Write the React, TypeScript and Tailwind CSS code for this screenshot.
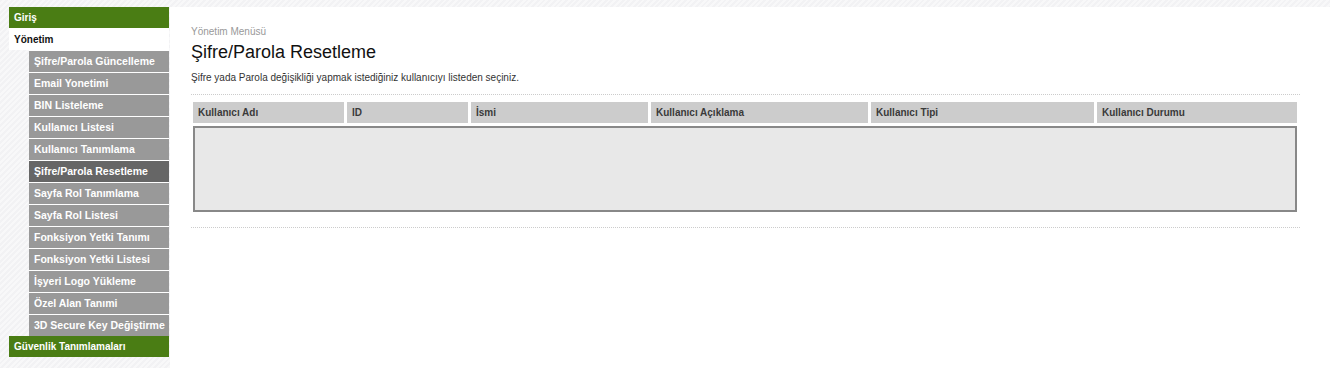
import React from 'react';

const subItems = [
  'Şifre/Parola Güncelleme',
  'Email Yonetimi',
  'BIN Listeleme',
  'Kullanıcı Listesi',
  'Kullanıcı Tanımlama',
  'Şifre/Parola Resetleme',
  'Sayfa Rol Tanımlama',
  'Sayfa Rol Listesi',
  'Fonksiyon Yetki Tanımı',
  'Fonksiyon Yetki Listesi',
  'İşyeri Logo Yükleme',
  'Özel Alan Tanımi',
  '3D Secure Key Değiştirme',
];

const columns = [
  'Kullanıcı Adı',
  'ID',
  'İsmi',
  'Kullanıcı Açıklama',
  'Kullanıcı Tipi',
  'Kullanıcı Durumu',
];

function App() {
  return (
    <div className="flex h-[368px] w-[1330px] overflow-hidden bg-[repeating-linear-gradient(135deg,#f2f2f4_0px,#f2f2f4_2px,#f8f8f9_2px,#f8f8f9_4px)] font-['Liberation_Sans',Arial,sans-serif]">
      {/* sol menü */}
      <aside className="w-[170px] shrink-0 pt-[7px] pl-[9px] pr-[1px]">
        <div className="flex h-[21px] items-center bg-[#4a7d14] px-[5px] text-[10px] font-bold text-white">
          Giriş
        </div>
        <div className="flex h-[22px] items-center bg-white px-[5px] pt-[1px] text-[10px] font-bold text-[#111]">
          Yönetim
        </div>
        <div className="pl-[20px]">
          {subItems.map((item) => (
            <div
              key={item}
              className={
                item === 'Şifre/Parola Resetleme'
                  ? 'flex h-[22px] items-center overflow-hidden whitespace-nowrap border-t border-white bg-[#666666] pl-[5px] text-[10.5px] font-bold text-white'
                  : 'flex h-[22px] items-center overflow-hidden whitespace-nowrap border-t border-white bg-[#999999] pl-[5px] text-[10.5px] font-bold text-white'
              }
            >
              {item}
            </div>
          ))}
        </div>
        <div className="flex h-[21px] items-center bg-[#4a7d14] px-[5px] text-[10px] font-bold text-white">
          Güvenlik Tanımlamaları
        </div>
      </aside>

      {/* içerik */}
      <main className="mt-[7px] flex-1 bg-white pl-[21px] pr-[30px] pt-[19px]">
        <div className="text-[10px] leading-[12px] text-[#999]">Yönetim Menüsü</div>
        <h1 className="mt-[4px] text-[18px] leading-[20px] text-[#111]">Şifre/Parola Resetleme</h1>
        <p className="mt-[10px] text-[10px] leading-[12px] text-[#333]">
          Şifre yada Parola değişikliği yapmak istediğiniz kullanıcıyı listeden seçiniz.
        </p>
        <div className="mt-[10px] border-t border-dotted border-[#ccc]" />

        <div className="mt-[7px] pl-[2px]">
          <div className="grid grid-cols-[151px_121px_177px_217px_223px_200px] gap-[3px]">
            {columns.map((c) => (
              <div
                key={c}
                className="flex h-[21px] items-center bg-[#cccccc] px-[5px] text-[10px] font-bold text-[#3a3a3a]"
              >
                {c}
              </div>
            ))}
          </div>
          <div className="mt-[3px] h-[86px] w-[1104px] border-2 border-[#888] bg-[#e8e8e8]" />
        </div>

        <div className="mt-[15px] border-t border-dotted border-[#ccc]" />
      </main>
    </div>
  );
}

export default App;
